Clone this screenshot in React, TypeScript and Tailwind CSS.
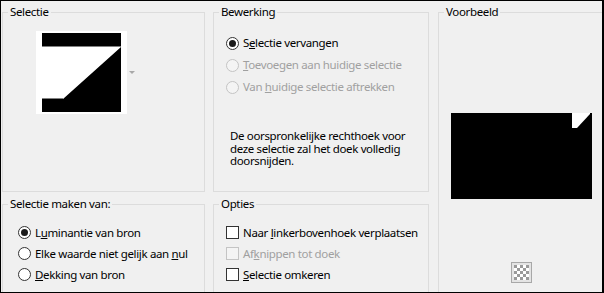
import React from 'react';

const font = { fontFamily: '"Noto Sans", "Open Sans", Arial, sans-serif' };

const Radio: React.FC<{ checked?: boolean; disabled?: boolean }> = ({ checked, disabled }) => (
  <span
    className={`flex items-center justify-center w-[13px] h-[13px] rounded-full border shrink-0 ${
      disabled ? 'border-[#c4c4c4] bg-[#f4f4f4]' : 'border-[#333333] bg-white'
    }`}
  >
    {checked && <span className="w-[7px] h-[7px] rounded-full bg-[#1a1a1a]" />}
  </span>
);

const Check: React.FC<{ disabled?: boolean }> = ({ disabled }) => (
  <span
    className={`w-[13px] h-[13px] border shrink-0 ${
      disabled ? 'border-[#c4c4c4] bg-[#f4f4f4]' : 'border-[#333333] bg-white'
    }`}
  />
);

const Group: React.FC<{ title: string; className?: string; children?: React.ReactNode }> = ({
  title,
  className,
  children,
}) => (
  <fieldset className={`border border-[#dcdcdc] min-w-0 shrink-0 ${className ?? ''}`}>
    <legend className="ml-[5px] px-[2px] leading-[16px] text-black">{title}</legend>
    {children}
  </fieldset>
);

const App: React.FC = () => {
  return (
    <div
      style={font}
      className="w-[604px] h-[293px] bg-[#f0f0f0] border-t border-l border-b border-r-2 border-black overflow-hidden flex text-[11.5px] tracking-[-0.35px] text-black whitespace-nowrap"
    >
      {/* left column */}
      <div className="ml-[1px] w-[203px] shrink-0 pt-[3px] flex flex-col">
        <Group title="Selectie" className="h-[188px]">
          <div className="mt-[11px] ml-[33px] flex items-center">
            <svg width="91" height="83" viewBox="0 0 91 83" className="shrink-0">
              <rect x="0" y="0" width="91" height="83" fill="#ffffff" />
              <rect x="6" y="2" width="79" height="13" fill="#000000" />
              <rect x="6" y="15" width="79" height="1" fill="#808080" />
              <polygon points="6,68 27,68 85,16 85,81 6,81" fill="#000000" />
              <rect x="6" y="67" width="21" height="1" fill="#808080" />
            </svg>
            <svg width="6" height="4" viewBox="0 0 6 4" className="ml-[2px] shrink-0">
              <polygon points="0,0 6,0 3,3" fill="#a8a8a8" />
            </svg>
          </div>
        </Group>
        <Group title="Selectie maken van:" className="mt-[4px] h-[110px]">
          <div className="mt-[10px] pl-[15px] flex flex-col">
            <div className="h-[21px] flex items-center gap-[4px]">
              <Radio checked />
              <span>
                L<span className="underline">u</span>minantie van bron
              </span>
            </div>
            <div className="h-[21px] flex items-center gap-[4px]">
              <Radio />
              <span>
                Elke waarde niet gelijk aan <span className="underline">n</span>ul
              </span>
            </div>
            <div className="h-[21px] flex items-center gap-[4px]">
              <Radio />
              <span>
                <span className="underline">D</span>ekking van bron
              </span>
            </div>
          </div>
        </Group>
      </div>

      {/* middle column */}
      <div className="ml-[8px] w-[216px] shrink-0 pt-[3px] flex flex-col">
        <Group title="Bewerking" className="h-[188px]">
          <div className="mt-[12px] pl-[12px] flex flex-col">
            <div className="h-[22px] flex items-center gap-[4px]">
              <Radio checked />
              <span>
                S<span className="underline">e</span>lectie vervangen
              </span>
            </div>
            <div className="h-[22px] flex items-center gap-[4px] text-[#a0a0a0]">
              <Radio disabled />
              <span>
                <span className="underline">T</span>oevoegen aan huidige selectie
              </span>
            </div>
            <div className="h-[22px] flex items-center gap-[4px] text-[#a0a0a0]">
              <Radio disabled />
              <span>
                Van <span className="underline">h</span>uidige selectie aftrekken
              </span>
            </div>
          </div>
          <p className="mt-[32px] ml-[16px] w-[190px] whitespace-normal leading-[12.5px]">
            De oorspronkelijke rechthoek voor deze selectie zal het doek volledig doorsnijden.
          </p>
        </Group>
        <Group title="Opties" className="mt-[4px] h-[110px]">
          <div className="mt-[10px] pl-[12px] flex flex-col">
            <div className="h-[21px] flex items-center gap-[4px]">
              <Check />
              <span>
                Naar <span className="underline">l</span>inkerbovenhoek verplaatsen
              </span>
            </div>
            <div className="h-[21px] flex items-center gap-[4px] text-[#a0a0a0]">
              <Check disabled />
              <span>
                Af<span className="underline">k</span>nippen tot doek
              </span>
            </div>
            <div className="h-[21px] flex items-center gap-[4px]">
              <Check />
              <span>
                <span className="underline">S</span>electie omkeren
              </span>
            </div>
          </div>
        </Group>
      </div>

      {/* right column */}
      <div className="ml-[9px] w-[172px] shrink-0 pt-[3px] flex flex-col">
        <Group title="Voorbeeld" className="h-[300px]">
          <div className="mt-[93px] ml-[12px] w-[141px] h-[86px]">
            <svg width="141" height="86" viewBox="0 0 141 86">
              <rect x="0" y="0" width="141" height="86" fill="#000000" />
              <polygon points="121,0 139,0 139,1 126,15 121,15" fill="#ffffff" />
            </svg>
          </div>
          <div className="mt-[63px] ml-[72px] w-[21px] h-[21px] border border-[#a8a8a8] bg-[#e4e4e4] flex items-center justify-center">
            <svg width="15" height="15" viewBox="0 0 15 15">
              {[0, 1, 2, 3, 4].map((r) =>
                [0, 1, 2, 3, 4].map((c) => (
                  <rect
                    key={`${r}-${c}`}
                    x={c * 3}
                    y={r * 3}
                    width="3"
                    height="3"
                    fill={(r + c) % 2 === 0 ? '#9a9a9a' : '#ffffff'}
                  />
                ))
              )}
            </svg>
          </div>
        </Group>
      </div>
    </div>
  );
};

export default App;
